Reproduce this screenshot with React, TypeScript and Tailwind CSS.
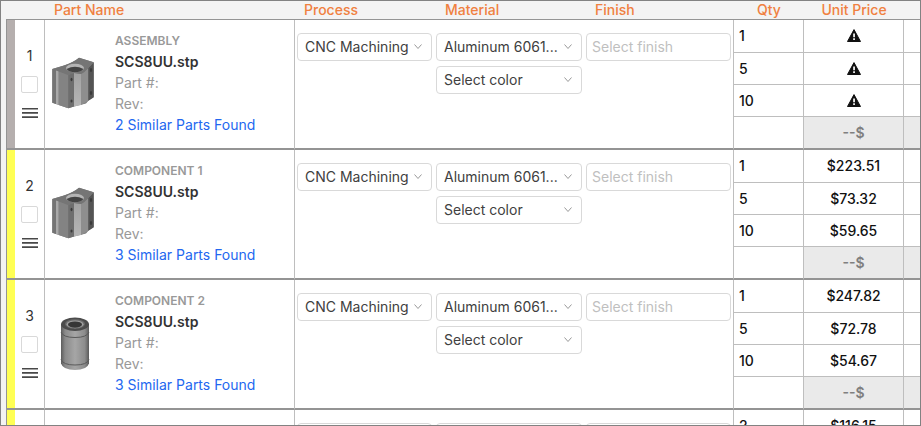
import { useId } from 'react';

type Tier = { qty: number; price: string | null };
type Part = { id: number; kind: string; similar: number; shape: 'block' | 'bushing'; tone: string; tiers: Tier[] };

const parts: Part[] = [
  { id: 1, kind: 'ASSEMBLY', similar: 2, shape: 'block', tone: 'bg-[#b5afae]', tiers: [{ qty: 1, price: null }, { qty: 5, price: null }, { qty: 10, price: null }] },
  { id: 2, kind: 'COMPONENT 1', similar: 3, shape: 'block', tone: 'bg-[#ffff54]', tiers: [{ qty: 1, price: '$223.51' }, { qty: 5, price: '$73.32' }, { qty: 10, price: '$59.65' }] },
  { id: 3, kind: 'COMPONENT 2', similar: 3, shape: 'bushing', tone: 'bg-[#ffff54]', tiers: [{ qty: 1, price: '$247.82' }, { qty: 5, price: '$72.78' }, { qty: 10, price: '$54.67' }] },
  { id: 4, kind: 'COMPONENT 3', similar: 3, shape: 'block', tone: 'bg-[#ffff54]', tiers: [{ qty: 2, price: '$116.15' }, { qty: 10, price: '$38.40' }, { qty: 20, price: '$29.12' }] },
];

function BlockPicture() {
  const id = useId();
  return (
    <svg width="56" height="59" viewBox="0 0 56 59" aria-hidden="true">
      <defs>
        <linearGradient id={id} x1="0" x2="0" y1="0" y2="1">
          <stop offset="0" stopColor="#a2a2a2" />
          <stop offset="1" stopColor="#b6b6b6" />
        </linearGradient>
      </defs>
      <path d="M7.300 15 19 11.500Q29 8 34 3.700L48.700 8.300V43.300L43.300 46.700L41 49.500 29 52.500 23.300 54.300 7.300 48.700Z" fill="#7b7b7b" />
      <path d="M7.300 15 11 16.300V50L7.300 48.700Z" fill="#747474" />
      <path d="M11 16.300 13.700 17.200V51L11 50Z" fill="#a9a9a9" />
      <path d="M13.700 17.200 23.300 21V54.300L13.700 51Z" fill="#838383" />
      <path d="M23.300 21 29 19V52.500L23.300 54.300Z" fill="#6e6e6e" />
      <path d="M29 19 36 20V51L29 52.500Z" fill={`url(#${id})`} />
      <path d="M36 20Q40 18 43.300 14V46.700Q40 49 36 51Z" fill="#8e8e8e" />
      <path d="M43.300 14 48.700 8.300V43.300L43.300 46.700Z" fill="#545454" />
      <path d="M7.300 15 19 11.500Q29 8 34 3.700L48.700 8.300 43.300 14Q40 18 36 20L29 19 23.300 21Z" fill="#757575" />
      <ellipse cx="30" cy="14" rx="9" ry="4.300" fill="#b4b4b4" />
      <path d="M21.500 15Q30 10.500 38.500 15Q36 18.300 30 18.300T21.500 15Z" fill="#444" />
      <g fill="#3a3a3a">
        <ellipse cx="26.500" cy="25.500" rx="1" ry="1.700" />
        <ellipse cx="26.500" cy="47" rx="1" ry="1.500" />
        <ellipse cx="46" cy="16" rx="1.200" ry="2" />
        <ellipse cx="46" cy="39" rx="1.200" ry="2" />
      </g>
    </svg>
  );
}

function BushingPicture() {
  const id = useId();
  return (
    <svg width="56" height="59" viewBox="0 0 56 59" aria-hidden="true">
      <defs>
        <linearGradient id={id} x1="0" x2="1" y1="0" y2="0">
          <stop offset="0" stopColor="#5c5c5c" />
          <stop offset="0.15" stopColor="#8a8a8a" />
          <stop offset="0.5" stopColor="#a6a6a6" />
          <stop offset="0.85" stopColor="#8c8c8c" />
          <stop offset="1" stopColor="#5a5a5a" />
        </linearGradient>
      </defs>
      <path d="M16 10V49.500Q18 56 30 56T44 49.500V10Z" fill={`url(#${id})`} />
      <ellipse cx="30" cy="10.300" rx="14" ry="6.700" fill="#4c4c4c" />
      <ellipse cx="30" cy="10" rx="10" ry="4.800" fill="#6c6c6c" />
      <ellipse cx="30" cy="10.300" rx="8.500" ry="3.900" fill="#a0a0a0" />
      <ellipse cx="30" cy="10.600" rx="7" ry="3.200" fill="#363636" />
      <path d="M16 18Q18 23.500 30 23.500T44 18M16 45.500Q18 51 30 51T44 45.500" fill="none" stroke="#5a5a5a" />
    </svg>
  );
}

function Warning() {
  return (
    <svg className="mx-auto block" width="14" height="14" viewBox="0 0 14 14" role="img" aria-label="Price unavailable">
      <path d="M7 .6 13.500 12.500H.5Z" fill="#111" stroke="#111" strokeWidth="1" strokeLinejoin="round" />
      <path d="M6.200 4.500h1.700v3.800H6.200ZM6.200 9.300h1.700V11H6.200Z" fill="#fff" />
    </svg>
  );
}

function Picker({ label, value, options }: { label: string; value: string; options: string[] }) {
  return (
    <div className="relative">
      <select
        aria-label={label}
        defaultValue={value}
        className="block h-7 w-full appearance-none rounded border border-[#d9d9d9] bg-white pr-4 pl-[7px] text-sm text-[#404040]"
      >
        {options.map((o) => (
          <option key={o}>{o}</option>
        ))}
      </select>
      <svg className="pointer-events-none absolute top-[10px] right-[10px]" width="8" height="8" viewBox="0 0 8 8" fill="none" stroke="#999" aria-hidden="true">
        <path d="M.5 1.500 4 5.500 7.500 1.500" />
      </svg>
    </div>
  );
}

function PartRows({ part }: { part: Part }) {
  const block = 'border-b-2 border-b-[#949494] p-0 align-top';
  return (
    <tbody>
      {[0, 1, 2, 3].map((i) => {
        const tier = part.tiers[i];
        const line = i === 3 ? 'h-[33px] border-b-2 border-b-[#949494]' : i === 0 ? 'h-[33px] border-b border-b-[#bebebe]' : 'h-8 border-b border-b-[#bebebe]';
        return (
          <tr key={i}>
            {i === 0 && (
              <>
                <td rowSpan={4} className={`${block} border-l border-l-[#949494] ${part.tone}`} />
                <td rowSpan={4} className={`${block} border-r border-r-[#bebebe]`}>
                  <div className="flex flex-col items-center pt-[26px] text-[#333]">
                    <span className="leading-5">{part.id}</span>
                    <input type="checkbox" aria-label={`Select part ${part.id}`} className="mt-[10px] size-[17px] appearance-none rounded-xs border border-[#d9d9d9] bg-white" />
                    <button type="button" aria-label={`Reorder part ${part.id}`} className="mt-[15px]">
                      <svg className="block" width="16" height="10" viewBox="0 0 16 10" fill="#484848" aria-hidden="true">
                        <path d="M0 0H16V1.600H0ZM0 4H16V5.800H0ZM0 8.200H16V10H0Z" />
                      </svg>
                    </button>
                  </div>
                </td>
                <td rowSpan={4} className={`${block} border-r border-r-[#bebebe]`}>
                  <div className="flex items-center gap-[14px] pt-[11px]">
                    {part.shape === 'block' ? <BlockPicture /> : <BushingPicture />}
                    <div className="leading-[21px] text-[#999]">
                      <div className="text-xs leading-5 font-semibold">{part.kind}</div>
                      <div className="font-semibold text-[#333]">SCS8UU.stp</div>
                      <div>Part #:</div>
                      <div>Rev:</div>
                      <a href="#similar" className="block text-[#2367f0]">{part.similar} Similar Parts Found</a>
                    </div>
                  </div>
                </td>
                <td rowSpan={4} className={`${block} pt-[13px] pr-1 pl-[2px]`}>
                  <Picker label={`Process for part ${part.id}`} value="CNC Machining" options={['CNC Machining', 'Sheet Metal']} />
                </td>
                <td rowSpan={4} className={`${block} pt-[13px] pr-1`}>
                  <div className="flex flex-col gap-[5px]">
                    <Picker label={`Material for part ${part.id}`} value="Aluminum 6061..." options={['Aluminum 6061...', 'Steel 1018']} />
                    <Picker label={`Color for part ${part.id}`} value="Select color" options={['Select color', 'Black']} />
                  </div>
                </td>
                <td rowSpan={4} className={`${block} border-r border-r-[#bebebe] pt-[13px] pr-[2px]`}>
                  <input
                    type="text"
                    aria-label={`Finish for part ${part.id}`}
                    placeholder="Select finish"
                    className="block h-7 w-full rounded border border-[#d9d9d9] px-[5px] pb-[2px] text-sm placeholder:text-[#bfbfbf]"
                  />
                </td>
              </>
            )}
            <td className={`${line} border-r border-r-[#bebebe] py-0 pr-0 pl-[5px] font-medium text-[#111]`}>{tier?.qty}</td>
            <td className={`${line} border-r border-r-[#bebebe] p-0 text-center ${tier ? 'font-medium text-[#111]' : 'bg-[#eaeaea] font-semibold text-[#808080]'}`}>
              {tier ? (tier.price ?? <Warning />) : '--$'}
            </td>
            <td className={`${line} p-0 ${tier ? '' : 'bg-[#eaeaea]'}`} />
          </tr>
        );
      })}
    </tbody>
  );
}

export default function App() {
  const head = 'h-[19px] border-b border-b-[#949494] bg-[#f3f3f3] p-0 font-medium leading-4';
  return (
    <main className="h-screen overflow-x-hidden overflow-y-auto border border-[#828282] bg-[#f3f3f3] pl-[5px] font-['Inter','Liberation_Sans',sans-serif] text-sm [scrollbar-width:none]">
      <table className="w-full table-fixed border-separate border-spacing-0 bg-white">
        <colgroup>
          <col className="w-[9px]" />
          <col className="w-[30px]" />
          <col />
          <col className="w-[141px]" />
          <col className="w-[150px]" />
          <col className="w-[148px]" />
          <col className="w-[70px]" />
          <col className="w-[100px]" />
          <col className="w-4" />
        </colgroup>
        <thead className="text-left text-[#f08040]">
          <tr>
            <td className={head} />
            <td className={head} />
            <th scope="col" className={`${head} pl-[9px]`}>Part Name</th>
            <th scope="col" className={`${head} pl-[9px]`}>Process</th>
            <th scope="col" className={`${head} pl-[9px]`}>Material</th>
            <th scope="col" className={`${head} pl-[9px]`}>Finish</th>
            <th scope="col" className={`${head} text-center`}>Qty</th>
            <th scope="col" className={`${head} text-center`}>Unit Price</th>
            <td className={head} />
          </tr>
        </thead>
        {parts.map((part) => (
          <PartRows key={part.id} part={part} />
        ))}
      </table>
    </main>
  );
}
